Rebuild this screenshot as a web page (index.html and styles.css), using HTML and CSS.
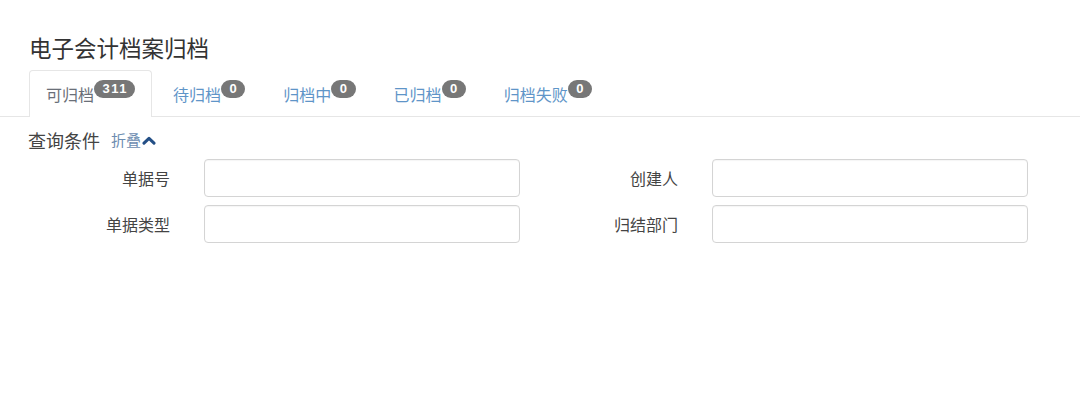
FILE: index.html
```html
<!DOCTYPE html>
<html lang="zh-CN">
<head>
<meta charset="utf-8">
<title>电子会计档案归档</title>
<link rel="stylesheet" href="styles.css">
</head>
<body>
<div class="page">
  <h1 class="title">电子会计档案归档</h1>
  <ul class="tabs">
    <li class="tab active"><span class="tab-text">可归档</span><span class="badge">311</span></li>
    <li class="tab"><span class="tab-text">待归档</span><span class="badge">0</span></li>
    <li class="tab"><span class="tab-text">归档中</span><span class="badge">0</span></li>
    <li class="tab"><span class="tab-text">已归档</span><span class="badge">0</span></li>
    <li class="tab"><span class="tab-text">归档失败</span><span class="badge">0</span></li>
  </ul>
  <div class="query-head">
    <span class="query-title">查询条件</span>
    <span class="fold">折叠<svg class="chev" width="14" height="9" viewBox="0 0 14 9"><path d="M2 7.2 L7 2.4 L12 7.2" fill="none" stroke="#234f86" stroke-width="3" stroke-linecap="round" stroke-linejoin="round"/></svg></span>
  </div>
  <div class="form">
    <div class="field"><label class="label">单据号</label><input class="input" type="text"></div>
    <div class="field"><label class="label">创建人</label><input class="input" type="text"></div>
    <div class="field"><label class="label">单据类型</label><input class="input" type="text"></div>
    <div class="field"><label class="label">归结部门</label><input class="input" type="text"></div>
  </div>
</div>
</body>
</html>
```
FILE: styles.css
```css
* { box-sizing: border-box; }
html, body { margin: 0; padding: 0; background: #fff; }
body {
  font-family: "Noto Sans CJK SC", "Noto Sans", "Liberation Sans", sans-serif;
  color: #333;
  width: 1080px;
  height: 412px;
  overflow: hidden;
}
.page { padding-top: 32px; }
.title {
  margin: 0 0 8px 29px;
  font-size: 22.5px;
  font-weight: normal;
  line-height: 30px;
  height: 30px;
  color: #333;
}
.tabs {
  list-style: none;
  margin: 0;
  padding: 0 0 0 29px;
  display: flex;
  border-bottom: 1px solid #e6e6e6;
  height: 47px;
}
.tab {
  display: flex;
  align-items: center;
  height: 47px;
  padding: 0 16px 0 16px;
  margin-right: 4px;
  border: 1px solid transparent;
  border-bottom: none;
  border-radius: 4px 4px 0 0;
  font-size: 16px;
  color: #5f95c8;
}
.tab.active {
  border-color: #e6e6e6;
  background: #fff;
  color: #6a6f78;
  margin-bottom: -1px;
}
.tab-text { line-height: 20px; }
.badge {
  position: relative;
  top: -5px;
  display: inline-block;
  height: 18px;
  line-height: 18px;
  padding: 0 7px 0 8.5px;
  letter-spacing: 1.5px;
  border-radius: 9px;
  background: #777;
  color: #fff;
  font-family: "Liberation Sans", Arial, sans-serif;
  font-weight: bold;
  font-size: 13px;
}
.query-head {
  display: flex;
  align-items: center;
  height: 24px;
  margin: 11px 0 7px 28px;
}
.query-title { font-size: 18px; color: #444; line-height: 24px; }
.fold {
  display: flex;
  align-items: center;
  margin-left: 11px;
  font-size: 15px;
  color: #6d8db1;
  line-height: 24px;
}
.chev { margin-left: 1px; margin-top: 1px; }
.form {
  display: grid;
  grid-template-columns: 508px 508px;
  row-gap: 8px;
  padding-left: 20px;
}
.field {
  display: flex;
  align-items: center;
}
.label {
  width: 150px;
  text-align: right;
  font-size: 16px;
  color: #444;
  margin-right: 34px;
}
.input {
  width: 316px;
  height: 38px;
  border: 1px solid #d4d4d4;
  border-radius: 4px;
  background: #fff;
  box-shadow: inset 0 1px 1px rgba(0,0,0,0.04);
  font-size: 14px;
  padding: 6px 12px;
}
```
